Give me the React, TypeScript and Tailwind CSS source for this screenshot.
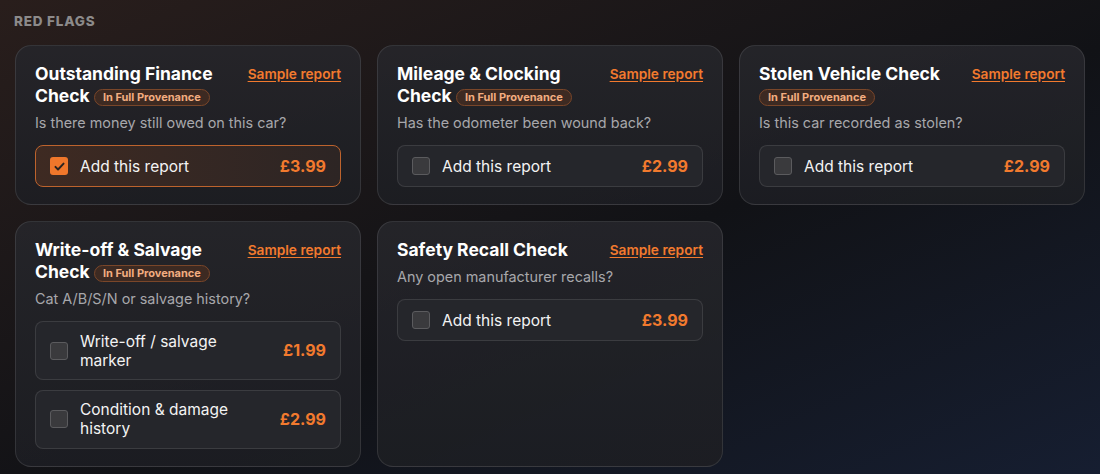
type Option = { label: string; price: string; checked?: boolean };

interface Check {
  title: string;
  badge?: boolean;
  question: string;
  options: Option[];
}

const checks: Check[] = [
  {
    title: "Outstanding Finance Check",
    badge: true,
    question: "Is there money still owed on this car?",
    options: [{ label: "Add this report", price: "£3.99", checked: true }],
  },
  {
    title: "Mileage & Clocking Check",
    badge: true,
    question: "Has the odometer been wound back?",
    options: [{ label: "Add this report", price: "£2.99" }],
  },
  {
    title: "Stolen Vehicle Check",
    badge: true,
    question: "Is this car recorded as stolen?",
    options: [{ label: "Add this report", price: "£2.99" }],
  },
  {
    title: "Write-off & Salvage Check",
    badge: true,
    question: "Cat A/B/S/N or salvage history?",
    options: [
      { label: "Write-off / salvage marker", price: "£1.99" },
      { label: "Condition & damage history", price: "£2.99" },
    ],
  },
  {
    title: "Safety Recall Check",
    question: "Any open manufacturer recalls?",
    options: [{ label: "Add this report", price: "£3.99" }],
  },
];

function Checkbox({ checked }: { checked?: boolean }) {
  if (checked) {
    return (
      <span className="flex h-[18px] w-[18px] shrink-0 items-center justify-center rounded-[3px] bg-[#f0772b]">
        <svg viewBox="0 0 16 16" className="h-[13px] w-[13px]" fill="none">
          <path d="M3 8.5l3.2 3.2L13 4.5" stroke="#2a2320" strokeWidth="2.4" strokeLinecap="round" strokeLinejoin="round" />
        </svg>
      </span>
    );
  }
  return <span className="h-[18px] w-[18px] shrink-0 rounded-[3px] border border-[#5b5b5e] bg-[#3a3a3d]" />;
}

function OptionRow({ label, price, checked }: Option) {
  return (
    <label
      className={`flex min-h-[42px] items-center rounded-lg border py-[9.5px] pl-[14px] pr-[14px] ${
        checked
          ? "border-[#bd632d] bg-linear-to-r from-[#3e2a22] to-[#2d2524]"
          : "border-white/10 bg-[#25262b]"
      }`}
    >
      <Checkbox checked={checked} />
      <span className="ml-3 flex-1 text-[15.5px] leading-[19px] text-[#f3f3f3]">{label}</span>
      <span className="ml-4 text-[16px] font-bold leading-[19px] text-[#f27a2e]">{price}</span>
    </label>
  );
}

function CheckCard({ title, badge, question, options }: Check) {
  return (
    <div className="rounded-2xl border border-white/10 bg-linear-to-b from-[#26262b]/90 to-[#1d1e23]/90 px-[19px] pb-[17px] pt-[17px]">
      <div className="flex items-start justify-between gap-4">
        <h3 className="text-[17.5px] font-bold leading-[22px] text-white">
          {title}
          {badge && (
            <>
              {" "}
              <span className="inline-block rounded-full border border-[#7a4629] bg-[#3d2a22] px-2 align-[1px] text-[11px] font-bold leading-[15px] text-[#f2ad80]">
                In Full Provenance
              </span>
            </>
          )}
        </h3>
        <a className="shrink-0 pt-[1px] text-[13.7px] font-semibold leading-5 text-[#f27a2e] underline underline-offset-2">
          Sample report
        </a>
      </div>
      <p className="mt-[6px] text-[14.4px] leading-5 text-[#a7a7ab]">{question}</p>
      <div className="mt-3 flex flex-col gap-[9.5px]">
        {options.map((o) => (
          <OptionRow key={o.label} {...o} />
        ))}
      </div>
    </div>
  );
}

export default function App() {
  return (
    <div
      className="min-h-screen bg-linear-to-br from-[#291e1c] via-[#111216] via-55% to-[#161e31] px-[15px] pt-[13px] pb-2"
      style={{ fontFamily: "Inter, 'Noto Sans', sans-serif" }}
    >
      <h2 className="mb-4 -ml-px text-[13.5px] font-extrabold uppercase leading-4 tracking-[0.06em] text-[#8c8a8a]">
        Red Flags
      </h2>
      <div className="grid grid-cols-3 gap-4">
        {checks.map((c) => (
          <CheckCard key={c.title} {...c} />
        ))}
      </div>
    </div>
  );
}
